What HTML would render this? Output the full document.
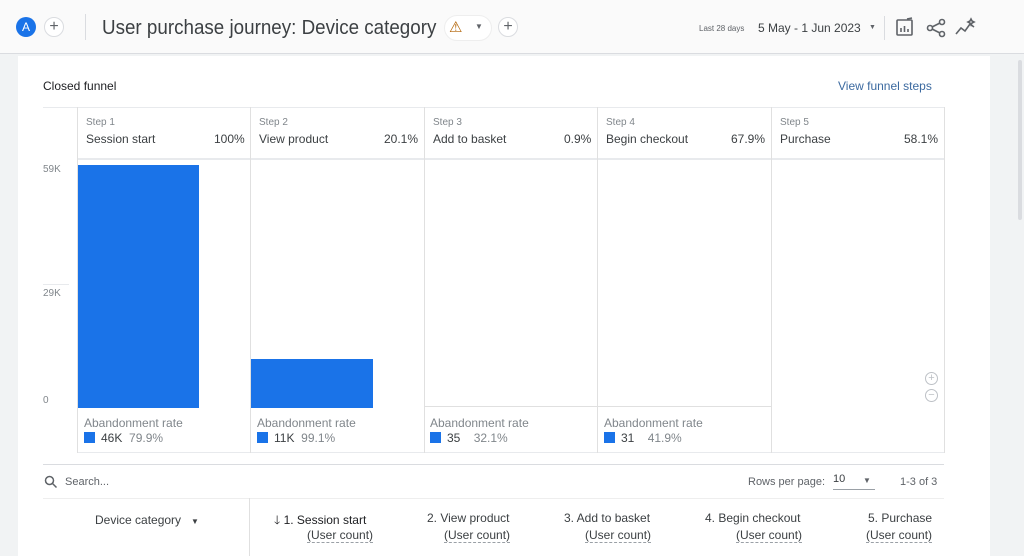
<!DOCTYPE html>
<html><head><style>
*{margin:0;padding:0;box-sizing:border-box}
body{width:1024px;height:556px;overflow:hidden;background:#f1f3f4;font-family:"Liberation Sans",sans-serif;position:relative;color:#3c4043}
.a{position:absolute}
.top{left:0;top:0;width:1024px;height:54px;background:#fafafa;border-bottom:1px solid #dadce0}
.card{left:18px;top:56px;width:972px;height:500px;background:#fff}
.t{font-size:12px;white-space:nowrap}
.s{font-size:10px;color:#80868b}
.vl{width:1px;background:#e0e0e0}
.bar{background:#1a73e8}
.sq{width:11px;height:11px;background:#1a73e8;display:inline-block;vertical-align:-1px;margin-right:6px}
</style></head><body>
<div class="a top"></div>
<div class="a" style="left:16px;top:17px;width:20px;height:20px;border-radius:50%;background:#1a73e8;color:#fff;font-size:12px;text-align:center;line-height:20px">A</div>
<div class="a" style="left:44px;top:17px;width:20px;height:20px;border-radius:50%;border:1px solid #dadce0;background:#fff;text-align:center;line-height:18px;font-size:16px;color:#5f6368">+</div>
<div class="a" style="left:85px;top:14px;width:1px;height:26px;background:#dadce0"></div>
<div class="a" style="left:102px;top:17px;font-size:20px;color:#3c4043;white-space:nowrap;transform:scaleX(.94);transform-origin:left">User purchase journey: Device category</div>
<div class="a" style="left:444px;top:15px;width:48px;height:26px;border-radius:13px;background:#fff;border:1px solid #eee"></div>
<div class="a" style="left:449px;top:18px;font-size:15px;color:#b06000">⚠</div>
<div class="a" style="left:475px;top:22px;font-size:8px;color:#5f6368">▼</div>
<div class="a" style="left:498px;top:17px;width:20px;height:20px;border-radius:50%;border:1px solid #dadce0;background:#fff;text-align:center;line-height:18px;font-size:16px;color:#5f6368">+</div>
<div class="a s" style="left:699px;top:24px;font-size:8px;color:#5f6368">Last 28 days</div>
<div class="a t" style="left:758px;top:21px;color:#3c4043">5 May - 1 Jun 2023</div>
<div class="a" style="left:869px;top:24px;font-size:7px;color:#5f6368">▼</div>
<div class="a" style="left:884px;top:16px;width:1px;height:24px;background:#dadce0"></div>
<svg class="a" style="left:895px;top:17px" width="90" height="22" fill="none" stroke="#5f6368" stroke-width="1.6">
<rect x="2" y="3" width="15" height="15" rx="1"/><path d="M6 15v-4M9.5 15v-6M13 15v-3M12 2l5-1"/>
<circle cx="47" cy="5" r="2.5"/><circle cx="35" cy="11" r="2.5"/><circle cx="47" cy="17" r="2.5"/><path d="M37 10l8-4M37 12l8 4"/>
<path d="M61 17l5-6 4 3 5-7 4 3M76 2l1 2 2 1-2 1-1 2-1-2-2-1 2-1z"/></svg>
<div class="a" style="left:1018px;top:60px;width:4px;height:160px;background:#dadce0;border-radius:2px"></div>
<div class="a card"></div>
<div class="a t" style="left:43px;top:79px;color:#202124">Closed funnel</div>
<div class="a t" style="left:838px;top:79px;color:#3c6aa0">View funnel steps</div>
<div class="a" style="left:43px;top:107px;width:901px;height:1px;background:#e8eaed"></div>
<div class="a" style="left:77px;top:158px;width:867px;height:2px;background:#e8eaed"></div>
<div class="a" style="left:77px;top:452px;width:867px;height:1px;background:#e8eaed"></div>
<div class="a vl" style="left:77px;top:107px;height:346px"></div>
<div class="a vl" style="left:250px;top:107px;height:346px"></div>
<div class="a vl" style="left:424px;top:107px;height:346px"></div>
<div class="a vl" style="left:597px;top:107px;height:346px"></div>
<div class="a vl" style="left:771px;top:107px;height:346px"></div>
<div class="a vl" style="left:944px;top:107px;height:346px"></div>
<div class="a" style="left:43px;top:284px;width:26px;height:1px;background:#e8eaed"></div>
<div class="a" style="left:424px;top:406px;width:347px;height:1px;background:#e0e0e0"></div>
<div class="a s" style="left:86px;top:117px">Step 1</div><div class="a t" style="left:86px;top:132px">Session start</div><div class="a t" style="left:214px;top:132px">100%</div>
<div class="a s" style="left:259px;top:117px">Step 2</div><div class="a t" style="left:259px;top:132px">View product</div><div class="a t" style="left:384px;top:132px">20.1%</div>
<div class="a s" style="left:433px;top:117px">Step 3</div><div class="a t" style="left:433px;top:132px">Add to basket</div><div class="a t" style="left:564px;top:132px">0.9%</div>
<div class="a s" style="left:606px;top:117px">Step 4</div><div class="a t" style="left:606px;top:132px">Begin checkout</div><div class="a t" style="left:731px;top:132px">67.9%</div>
<div class="a s" style="left:780px;top:117px">Step 5</div><div class="a t" style="left:780px;top:132px">Purchase</div><div class="a t" style="left:904px;top:132px">58.1%</div>
<div class="a s" style="left:43px;top:164px">59K</div>
<div class="a s" style="left:43px;top:288px">29K</div>
<div class="a s" style="left:43px;top:395px">0</div>
<div class="a bar" style="left:78px;top:165px;width:121px;height:243px"></div>
<div class="a bar" style="left:251px;top:359px;width:122px;height:49px"></div>
<div class="a" style="left:925px;top:372px;width:13px;height:13px;border:1px solid #bdc1c6;border-radius:50%;font-size:11px;line-height:11px;text-align:center;color:#bdc1c6">+</div>
<div class="a" style="left:925px;top:389px;width:13px;height:13px;border:1px solid #bdc1c6;border-radius:50%;font-size:11px;line-height:10px;text-align:center;color:#bdc1c6">−</div>
<div class="a t" style="left:84px;top:416px;color:#80868b">Abandonment rate</div>
<div class="a t" style="left:84px;top:431px"><span class="sq"></span>46K&nbsp; <span style="color:#80868b">79.9%</span></div>
<div class="a t" style="left:257px;top:416px;color:#80868b">Abandonment rate</div>
<div class="a t" style="left:257px;top:431px"><span class="sq"></span>11K&nbsp; <span style="color:#80868b">99.1%</span></div>
<div class="a t" style="left:430px;top:416px;color:#80868b">Abandonment rate</div>
<div class="a t" style="left:430px;top:431px"><span class="sq"></span>35&nbsp;&nbsp;&nbsp; <span style="color:#80868b">32.1%</span></div>
<div class="a t" style="left:604px;top:416px;color:#80868b">Abandonment rate</div>
<div class="a t" style="left:604px;top:431px"><span class="sq"></span>31&nbsp;&nbsp;&nbsp; <span style="color:#80868b">41.9%</span></div>
<div class="a" style="left:43px;top:464px;width:901px;height:1px;background:#dadce0"></div>
<svg class="a" style="left:44px;top:475px" width="14" height="14" fill="none" stroke="#5f6368" stroke-width="1.5"><circle cx="5.5" cy="5.5" r="4"/><path d="M8.5 8.5l4 4"/></svg>
<div class="a t" style="left:65px;top:476px;font-size:11px;color:#5f6368">Search...</div>
<div class="a t" style="left:748px;top:476px;font-size:11px;color:#5f6368">Rows per page:</div>
<div class="a t" style="left:833px;top:473px;font-size:11px">10</div>
<div class="a" style="left:833px;top:489px;width:42px;height:1px;background:#9aa0a6"></div>
<div class="a" style="left:863px;top:476px;font-size:8px;color:#5f6368">▼</div>
<div class="a t" style="left:900px;top:476px;font-size:11px;color:#5f6368">1-3 of 3</div>
<div class="a" style="left:43px;top:498px;width:901px;height:1px;background:#eee"></div>
<div class="a" style="left:249px;top:498px;width:1px;height:58px;background:#e0e0e0"></div>
<div class="a t" style="left:95px;top:513px">Device category&nbsp;&nbsp; <span style="font-size:8px">▼</span></div>
<div class="a t" style="left:274px;top:511px;color:#202124">🡓 1. Session start</div>
<div class="a t" style="left:427px;top:511px">2. View product</div>
<div class="a t" style="left:564px;top:511px">3. Add to basket</div>
<div class="a t" style="left:705px;top:511px">4. Begin checkout</div>
<div class="a t" style="left:868px;top:511px">5. Purchase</div>
<div class="a t" style="left:307px;top:528px;border-bottom:1px dashed #9aa0a6">(User count)</div>
<div class="a t" style="left:444px;top:528px;border-bottom:1px dashed #9aa0a6">(User count)</div>
<div class="a t" style="left:585px;top:528px;border-bottom:1px dashed #9aa0a6">(User count)</div>
<div class="a t" style="left:736px;top:528px;border-bottom:1px dashed #9aa0a6">(User count)</div>
<div class="a t" style="left:866px;top:528px;border-bottom:1px dashed #9aa0a6">(User count)</div>
</body></html>
